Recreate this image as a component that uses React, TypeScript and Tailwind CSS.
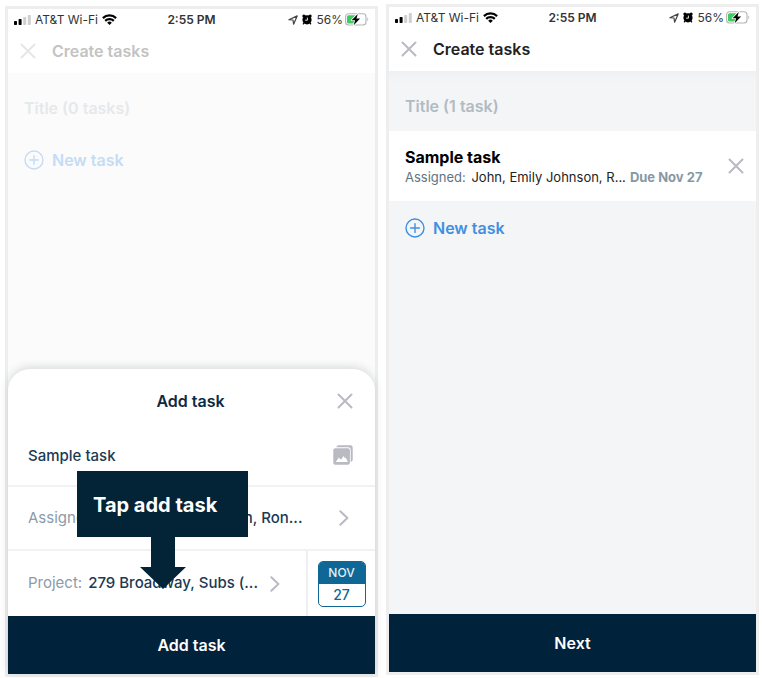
import React from 'react';

function SignalIcon() {
  return (
    <svg width="17" height="10" viewBox="0 0 17 10" aria-hidden="true">
      <rect x="0" y="6" width="3" height="4" rx="0.7" fill="#000" />
      <rect x="4.6" y="4" width="3" height="6" rx="0.7" fill="#000" />
      <rect x="9.2" y="2" width="3" height="8" rx="0.7" fill="#cfcfcf" />
      <rect x="13.8" y="0" width="3" height="10" rx="0.7" fill="#cfcfcf" />
    </svg>
  );
}

function WifiIcon() {
  return (
    <svg width="15" height="11" viewBox="0 0 15 11" aria-hidden="true">
      <g fill="none" stroke="#000" strokeWidth="2.2">
        <path d="M0.9 4.1a9.4 9.4 0 0 1 13.2 0" />
        <path d="M3.2 6.9a6.1 6.1 0 0 1 8.6 0" />
      </g>
      <path d="M5.2 8.7a3.3 3.3 0 0 1 4.6 0L7.5 10.9z" fill="#000" />
    </svg>
  );
}

function LocationIcon() {
  return (
    <svg width="10" height="10" viewBox="0 0 10 10" aria-hidden="true">
      <path d="M0.9 4.7L9.2 0.9L5.6 9.2L5 5z" fill="none" stroke="#444" strokeWidth="1.2" strokeLinejoin="round" />
    </svg>
  );
}

function AlarmIcon() {
  return (
    <svg width="10" height="11" viewBox="0 0 10 11" aria-hidden="true">
      <circle cx="5" cy="5.8" r="4.6" fill="#000" />
      <circle cx="1.9" cy="2" r="1.6" fill="#000" />
      <circle cx="8.1" cy="2" r="1.6" fill="#000" />
      <path d="M2 9l-0.6 0.8M8 9l0.6 0.8" stroke="#000" strokeWidth="1.4" strokeLinecap="round" />
      <path d="M5.4 3.6v2.6H3.2" fill="none" stroke="#fff" strokeWidth="0.9" />
    </svg>
  );
}

function BatteryIcon() {
  return (
    <svg width="24" height="13" viewBox="0 0 24 13" aria-hidden="true">
      <rect x="0.6" y="0.8" width="20.4" height="11.2" rx="3" fill="#fff" stroke="#b4b4b4" strokeWidth="1.1" />
      <path d="M22.3 4.6c1.3 0.6 1.3 3 0 3.6z" fill="#b4b4b4" />
      <path d="M3.6 2.2H11v8.4H3.6A1.6 1.6 0 0 1 2 9V3.8a1.6 1.6 0 0 1 1.6-1.6z" fill="#3fcb5f" />
      <path d="M12.8 0.9L6.6 7.3h3.5L8.7 12.2l6.4-6.6h-3.6z" fill="#000" stroke="#fff" strokeWidth="1.6" paintOrder="stroke" strokeLinejoin="round" />
    </svg>
  );
}

function CloseIcon() {
  return (
    <svg width="16" height="16" viewBox="0 0 16 16" aria-hidden="true">
      <path d="M1.5 1.5l13 13M14.5 1.5l-13 13" stroke="currentColor" strokeWidth="2" strokeLinecap="round" />
    </svg>
  );
}

function PlusCircleIcon() {
  return (
    <svg width="20" height="20" viewBox="0 0 20 20" aria-hidden="true">
      <g fill="none" stroke="currentColor" strokeWidth="1.4" strokeLinecap="round">
        <circle cx="10" cy="10" r="9" />
        <path d="M10 5.6v8.8M5.6 10h8.8" />
      </g>
    </svg>
  );
}

function ChevronIcon() {
  return (
    <svg width="10" height="16" viewBox="0 0 10 16" aria-hidden="true">
      <path d="M1.3 1.2L8.4 8l-7.1 6.8" fill="none" stroke="#b9bac2" strokeWidth="2" strokeLinecap="round" strokeLinejoin="round" />
    </svg>
  );
}

function PhotosIcon() {
  return (
    <svg width="20" height="20" viewBox="0 0 20 20" aria-hidden="true">
      <path d="M5.5 0.3h12a2.2 2.2 0 0 1 2.2 2.2v12.3a2.2 2.2 0 0 1-2 2.2V4.8a2.5 2.5 0 0 0-2.5-2.5H3.4a2.2 2.2 0 0 1 2.1-2z" fill="#b9bac2" />
      <rect x="0.3" y="3.2" width="16.6" height="16.5" rx="2" fill="#b9bac2" />
      <path d="M2.8 17l3-4.6 2.2 2.4 2.6-3.8 1.4 2.2 0.8-0.8 2 4.6z" fill="#fff" />
    </svg>
  );
}

function StatusBar() {
  return (
    <div className="h-5 pt-px px-1.5 grid grid-cols-[1fr_auto_1fr] items-center text-xs text-[#333]">
      <div className="flex items-center gap-1">
        <SignalIcon />
        <span>AT&amp;T Wi-Fi</span>
        <WifiIcon />
      </div>
      <span className="font-semibold">2:55 PM</span>
      <div className="flex items-center justify-end gap-1">
        <LocationIcon />
        <AlarmIcon />
        <span className="-mr-0.5">56%</span>
        <BatteryIcon />
      </div>
    </div>
  );
}

function Phone({ dimmed, children }: { dimmed?: boolean; children: React.ReactNode }) {
  return (
    <section
      className={`relative flex-1 min-w-0 flex flex-col border-3 border-[#eeeeee] ${dimmed ? 'bg-[#fbfbfb]' : 'bg-[#f4f5f7]'}`}
    >
      <header className="bg-white">
        <StatusBar />
        <div className={`h-11 px-3 flex items-center gap-4 ${dimmed ? 'text-[#c3c3c3]' : 'text-[#222]'}`}>
          <button aria-label="Close" className={dimmed ? 'text-[#e6e6e9]' : 'text-[#b9bac2]'}>
            <CloseIcon />
          </button>
          <h1 className="text-base font-semibold">Create tasks</h1>
        </div>
      </header>
      {children}
    </section>
  );
}

function TitleField({ placeholder, dimmed }: { placeholder: string; dimmed?: boolean }) {
  return (
    <div className={dimmed ? '' : 'bg-linear-to-b from-[#eff0f2] to-[#f4f5f7] to-20%'}>
      <input
        aria-label="Title"
        placeholder={placeholder}
        className={`block w-full h-15 pt-2.5 px-4 text-base font-semibold outline-none ${
          dimmed ? 'placeholder:text-[#e5e9ec]' : 'placeholder:text-[#b0bbc4]'
        }`}
      />
    </div>
  );
}

function NewTaskButton({ dimmed }: { dimmed?: boolean }) {
  return (
    <button
      className={`self-start h-[54px] px-4 flex items-center gap-2 text-base font-semibold ${
        dimmed ? 'text-[#c5dcf5]' : 'text-[#3f90e0]'
      }`}
    >
      <PlusCircleIcon />
      New task
    </button>
  );
}

function AddTaskSheet() {
  return (
    <div role="dialog" aria-label="Add task" className="mt-auto bg-white rounded-t-[22px] shadow-[0_-2px_8px_rgba(30,50,70,0.16)]">
      <div className="h-14 pt-2 pl-5 pr-[22px] grid grid-cols-[1fr_auto_1fr] items-center">
        <h2 className="col-start-2 text-base font-semibold text-[#0b2a45]">Add task</h2>
        <button aria-label="Close" className="justify-self-end text-[#b9bac2]">
          <CloseIcon />
        </button>
      </div>
      <div className="h-[62px] pl-5 pr-[22px] flex items-center border-b-2 border-[#f1f2f4]">
        <input
          aria-label="Task name"
          defaultValue="Sample task"
          className="flex-1 min-w-0 pt-0.5 text-[15px] font-medium text-[#1c3a52] outline-none"
        />
        <button aria-label="Add photos">
          <PhotosIcon />
        </button>
      </div>
      <button className="w-full h-16 pl-5 pr-[26px] flex items-center justify-between border-b-2 border-[#f1f2f4] text-[15px] text-[#1c3a52] font-medium">
        <span>
          <span className="mr-0.5 text-[#8b9ba9] font-normal">Assigned:</span> John, Emily Johnson, Ron...
        </span>
        <ChevronIcon />
      </button>
      <div className="h-[65px] flex">
        <button className="flex-1 min-w-0 pl-5 pr-[26px] flex items-center justify-between border-r-2 border-[#eef0f2] text-[15px] text-[#1c3a52] font-medium">
          <span className="whitespace-nowrap">
            <span className="mr-0.5 text-[#8b9ba9] font-normal">Project:</span> 279 Broadway, Subs (...
          </span>
          <ChevronIcon />
        </button>
        <button aria-label="Due Nov 27" className="w-[67px] flex items-center justify-center">
          <span className="w-12 h-[46px] flex flex-col overflow-hidden rounded-[5px] border border-[#0e6795] text-[#0e6795] bg-white">
            <span className="h-[22px] bg-[#0e6795] text-[#e4f0f6] text-xs leading-[22px] font-medium">NOV</span>
            <span className="text-sm leading-[22px] font-medium">27</span>
          </span>
        </button>
      </div>
      <button className="w-full h-[58px] bg-[#00223b] text-white text-base font-semibold">Add task</button>
    </div>
  );
}

function Callout() {
  return (
    <div className="absolute left-[69px] bottom-[85px] flex flex-col items-center">
      <p className="w-[171px] h-[66px] pl-4 bg-[#032336] text-xl leading-[68px] font-bold text-white whitespace-nowrap">
        Tap add task
      </p>
      <svg width="46" height="52" viewBox="0 0 46 52" aria-hidden="true">
        <path d="M11 0h24v30h11L23 52L0 30h11z" fill="#032336" />
      </svg>
    </div>
  );
}

function TaskCard() {
  return (
    <article className="h-[70px] px-3 pl-4 flex items-center bg-white">
      <div className="flex-1 min-w-0 pt-0.5">
        <h2 className="text-base leading-5 font-bold text-black">Sample task</h2>
        <p className="flex gap-1 text-[13px] leading-5 whitespace-nowrap text-[#222]">
          <span>
            <span className="mr-0.5 text-[#5f7482]">Assigned:</span> John, Emily Johnson, R...
          </span>
          <span className="font-bold text-[#8798a5]">Due Nov 27</span>
        </p>
      </div>
      <button aria-label="Remove task" className="text-[#b9bac2]">
        <CloseIcon />
      </button>
    </article>
  );
}

export default function App() {
  return (
    <main className="min-h-screen pl-[5px] pr-[3px] flex gap-2 bg-white font-[Inter,sans-serif]">
      <div className="flex-1 min-w-0 flex pt-1.5 pb-px">
        <Phone dimmed>
          <TitleField placeholder="Title (0 tasks)" dimmed />
          <NewTaskButton dimmed />
          <AddTaskSheet />
          <Callout />
        </Phone>
      </div>
      <div className="flex-1 min-w-0 flex pt-1 pb-[3px]">
        <Phone>
          <TitleField placeholder="Title (1 task)" />
          <TaskCard />
          <NewTaskButton />
          <button className="mt-auto h-[58px] bg-[#00223b] text-white text-base font-semibold">Next</button>
        </Phone>
      </div>
    </main>
  );
}
